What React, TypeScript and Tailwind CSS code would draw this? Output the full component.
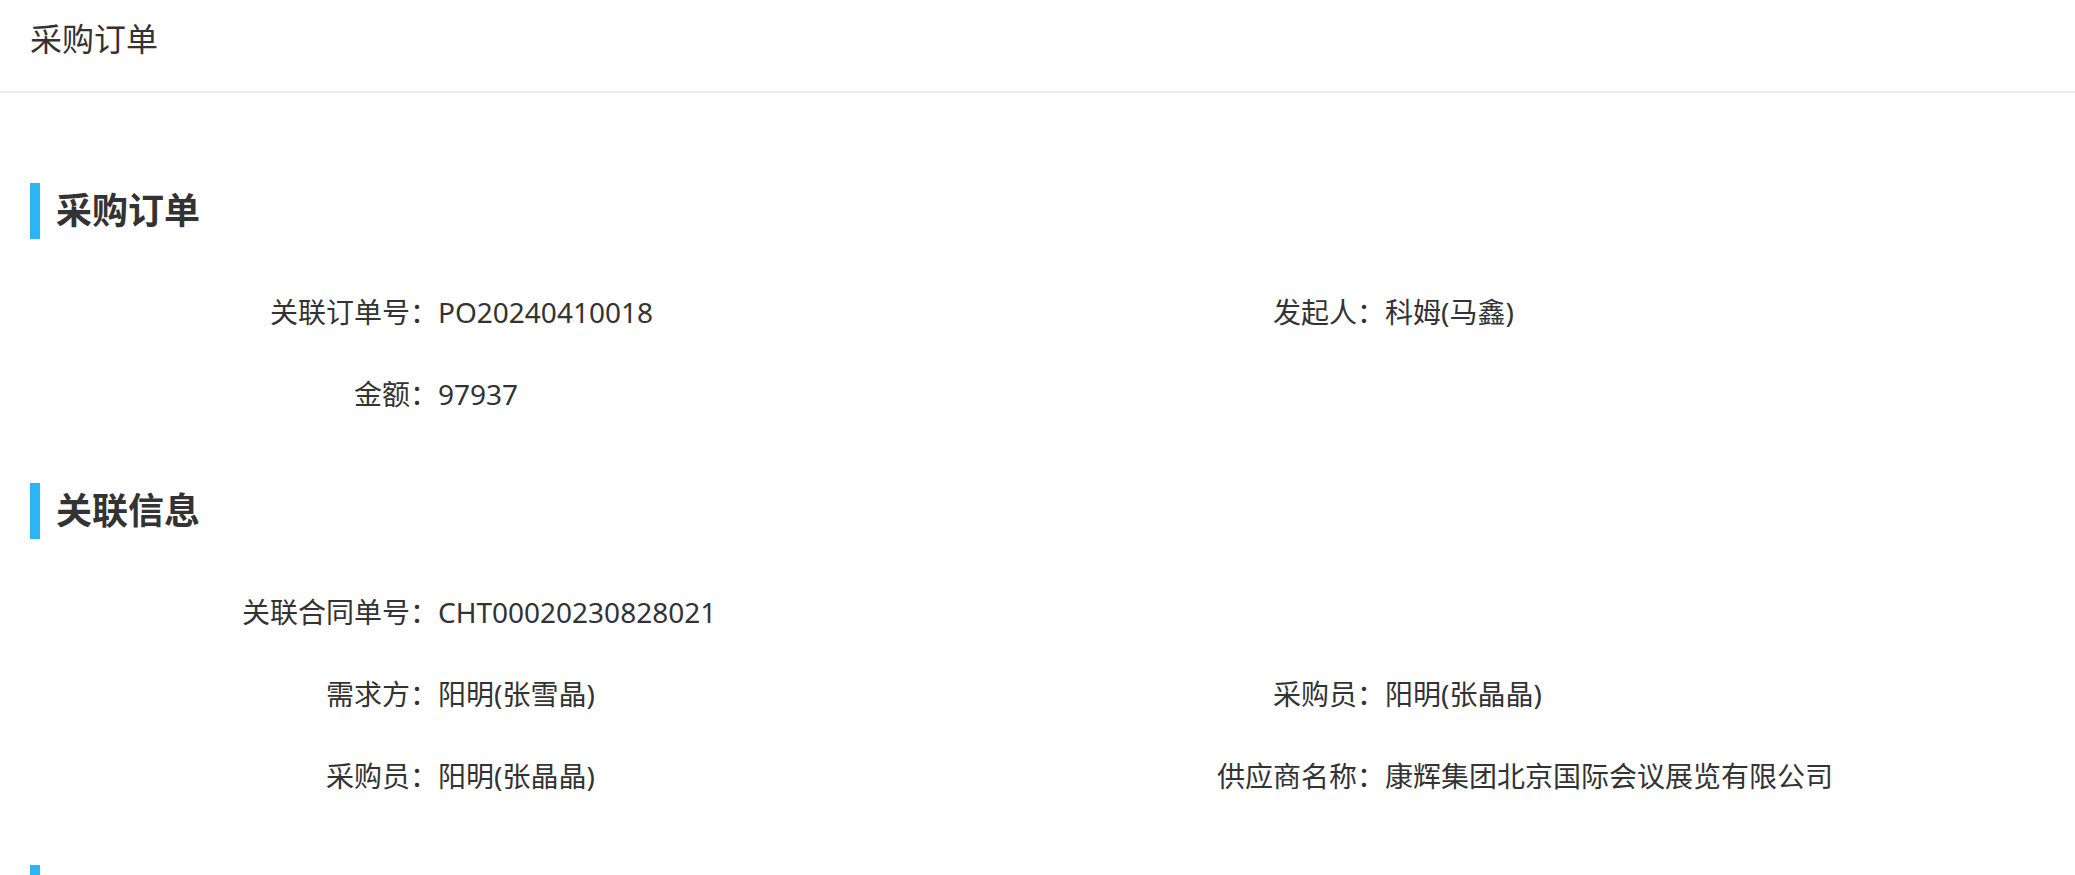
import React from "react";

type Field = { label: string; value: string };

const sections: { title: string; rows: (Field | null)[][] }[] = [
  {
    title: "采购订单",
    rows: [
      [
        { label: "关联订单号：", value: "PO20240410018" },
        { label: "发起人：", value: "科姆(马鑫)" },
      ],
      [{ label: "金额：", value: "97937" }, null],
    ],
  },
  {
    title: "关联信息",
    rows: [
      [{ label: "关联合同单号：", value: "CHT00020230828021" }, null],
      [
        { label: "需求方：", value: "阳明(张雪晶)" },
        { label: "采购员：", value: "阳明(张晶晶)" },
      ],
      [
        { label: "采购员：", value: "阳明(张晶晶)" },
        { label: "供应商名称：", value: "康辉集团北京国际会议展览有限公司" },
      ],
    ],
  },
];

function Item({ field }: { field: Field | null }) {
  return (
    <div className="w-[947px] flex items-center">
      {field && (
        <>
          <span className="w-[408px] text-right shrink-0">{field.label}</span>
          <span>{field.value}</span>
        </>
      )}
    </div>
  );
}

export default function App() {
  return (
    <div
      className="h-screen overflow-hidden bg-white text-[#333333]"
      style={{ fontFamily: '"Noto Sans", "Noto Sans CJK SC", sans-serif' }}
    >
      {/* Header */}
      <header className="h-[93px] border-b-2 border-[#ececec] pl-[30px] pt-[17px]">
        <h1 className="text-[32px] leading-[44px] font-normal">采购订单</h1>
      </header>

      {/* Content */}
      <main className="pt-[90px] pl-[30px]">
        {sections.map((s) => (
          <section key={s.title} className="mb-[48px]">
            <div className="h-[56px] flex items-center mb-[32px]">
              <span className="w-[10px] h-full bg-[#2bb5f6]" />
              <h2 className="ml-[16px] text-[36px] font-bold leading-none">{s.title}</h2>
            </div>
            <div className="flex flex-col text-[28px]">
              {s.rows.map((row, i) => (
                <div key={i} className="h-[82px] flex items-center">
                  {row.map((f, j) => (
                    <Item key={j} field={f} />
                  ))}
                </div>
              ))}
            </div>
          </section>
        ))}
        {/* next section, only its marker is in view */}
        <section className="mt-[2px]">
          <div className="h-[56px] flex items-center">
            <span className="w-[10px] h-full bg-[#2bb5f6]" />
          </div>
        </section>
      </main>
    </div>
  );
}
